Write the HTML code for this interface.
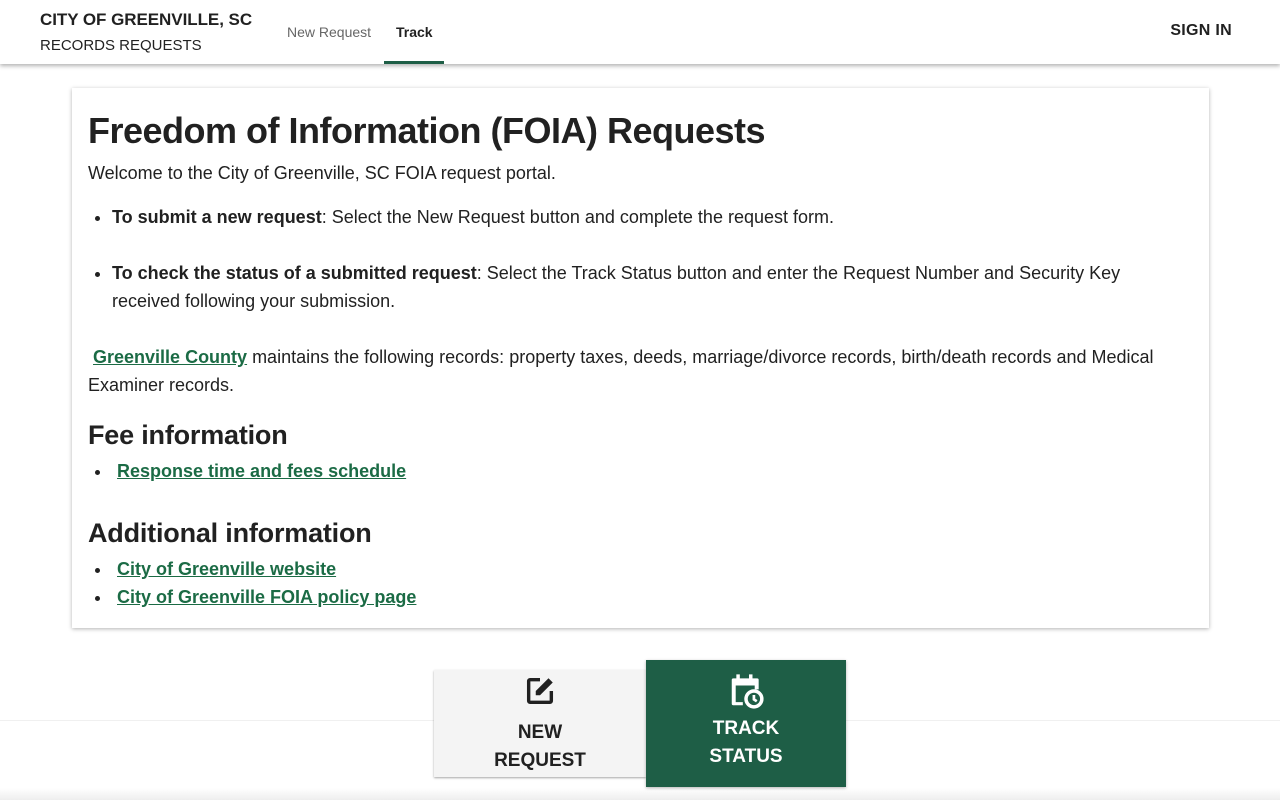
<!DOCTYPE html>
<html><head><style>
*{margin:0;padding:0;box-sizing:border-box}
body{width:1280px;height:800px;overflow:hidden;background:#fff;font-family:"Liberation Sans",Arial,sans-serif;color:#212121;position:relative}
.hdr{position:absolute;left:0;top:0;width:1280px;height:64px;background:#fff;box-shadow:0 2px 4px rgba(0,0,0,.3);z-index:2}
.t1{position:absolute;left:40px;top:10px;font-size:17px;font-weight:bold;letter-spacing:-0.05px}
.t2{position:absolute;left:40px;top:37px;font-size:15px}
.nav{position:absolute;top:24px;font-size:14px}
.sign{position:absolute;right:48px;top:22px;font-size:16px;font-weight:bold;letter-spacing:0.3px}
.card{position:absolute;left:72px;top:88px;width:1137px;height:540px;box-shadow:0 1px 4px rgba(0,0,0,.3);background:#fff;padding:0 16px}
h1{position:absolute;left:16px;top:22px;font-size:36px;font-weight:bold;letter-spacing:-0.5px}
p,li{font-size:18px;line-height:28px}
.a{color:#1b6b45;font-weight:bold;text-decoration:underline}
.abs{position:absolute;left:16px}
ul{list-style:disc;padding-left:24px}
h2{font-size:27px;font-weight:bold;letter-spacing:-0.2px}
.foot{position:absolute;left:0;top:720px;width:1280px;height:80px;border-top:1px solid #f0f0f0;background:linear-gradient(#fff 85%,#eee)}
.b1{position:absolute;left:434px;top:670px;width:212px;height:107px;background:#f4f4f4;box-shadow:0 1px 2px rgba(0,0,0,.35);text-align:center;font-weight:bold;font-size:19px;line-height:28px}
.b2{position:absolute;left:646px;top:660px;width:200px;height:127px;background:#1e5e46;box-shadow:0 1px 3px rgba(0,0,0,.3);text-align:center;font-weight:bold;font-size:19px;line-height:28px;color:#fff}
</style></head><body>
<div class="hdr">
<div class="t1">CITY OF GREENVILLE, SC</div>
<div class="t2">RECORDS REQUESTS</div>
<div class="nav" style="left:287px;color:#666">New Request</div>
<div class="nav" style="left:396px;font-weight:bold">Track</div>
<div style="position:absolute;left:384px;top:61px;width:60px;height:3px;background:#1e5e46"></div>
<div class="sign">SIGN IN</div>
</div>
<div class="card">
<h1>Freedom of Information (FOIA) Requests</h1>
<p class="abs" style="top:71px">Welcome to the City of Greenville, SC FOIA request portal.</p>
<ul class="abs" style="top:115px;width:1100px"><li><b>To submit a new request</b>: Select the New Request button and complete the request form.</li></ul>
<ul class="abs" style="top:171px;width:1100px"><li><b>To check the status of a submitted request</b>: Select the Track Status button and enter the Request Number and Security Key received following your submission.</li></ul>
<p class="abs" style="top:255px;width:1110px">&nbsp;<span class="a">Greenville County</span> maintains the following records: property taxes, deeds, marriage/divorce records, birth/death records and Medical Examiner records.</p>
<h2 class="abs" style="top:332px">Fee information</h2>
<ul class="abs" style="top:369px"><li>&nbsp;<span class="a">Response time and fees schedule</span></li></ul>
<h2 class="abs" style="top:430px">Additional information</h2>
<ul class="abs" style="top:467px"><li>&nbsp;<span class="a">City of Greenville website</span></li><li>&nbsp;<span class="a">City of Greenville FOIA policy page</span></li></ul>
</div>
<div class="foot"></div>
<div class="b1"><svg width="34" height="34" viewBox="0 0 24 24" style="margin-top:4px"><path d="M12 4H5a1 1 0 0 0-1 1v14a1 1 0 0 0 1 1h14a1 1 0 0 0 1-1v-7" fill="none" stroke="#212121" stroke-width="2.4"/><path d="M18 3l3 3-9 9H9v-3z" fill="#212121"/></svg><div style="margin-top:2px">NEW<br>REQUEST</div></div>
<div class="b2"><svg width="38" height="38" viewBox="0 0 24 24" style="margin-top:12px"><path d="M7 1.5v3.5M15 1.5v3.5" stroke="#fff" stroke-width="2.2"/><path d="M10 19H5.5V8.5h12V11h2.5V5a1 1 0 0 0-1-1H4a1 1 0 0 0-1 1v15a1 1 0 0 0 1 1h6z" fill="#fff"/><circle cx="17" cy="17" r="5" fill="none" stroke="#fff" stroke-width="2.2"/><path d="M17 14.5v2.8l1.8 1.2" stroke="#fff" stroke-width="1.7" fill="none"/></svg><div style="margin-top:-4px">TRACK<br>STATUS</div></div>
</body></html>
